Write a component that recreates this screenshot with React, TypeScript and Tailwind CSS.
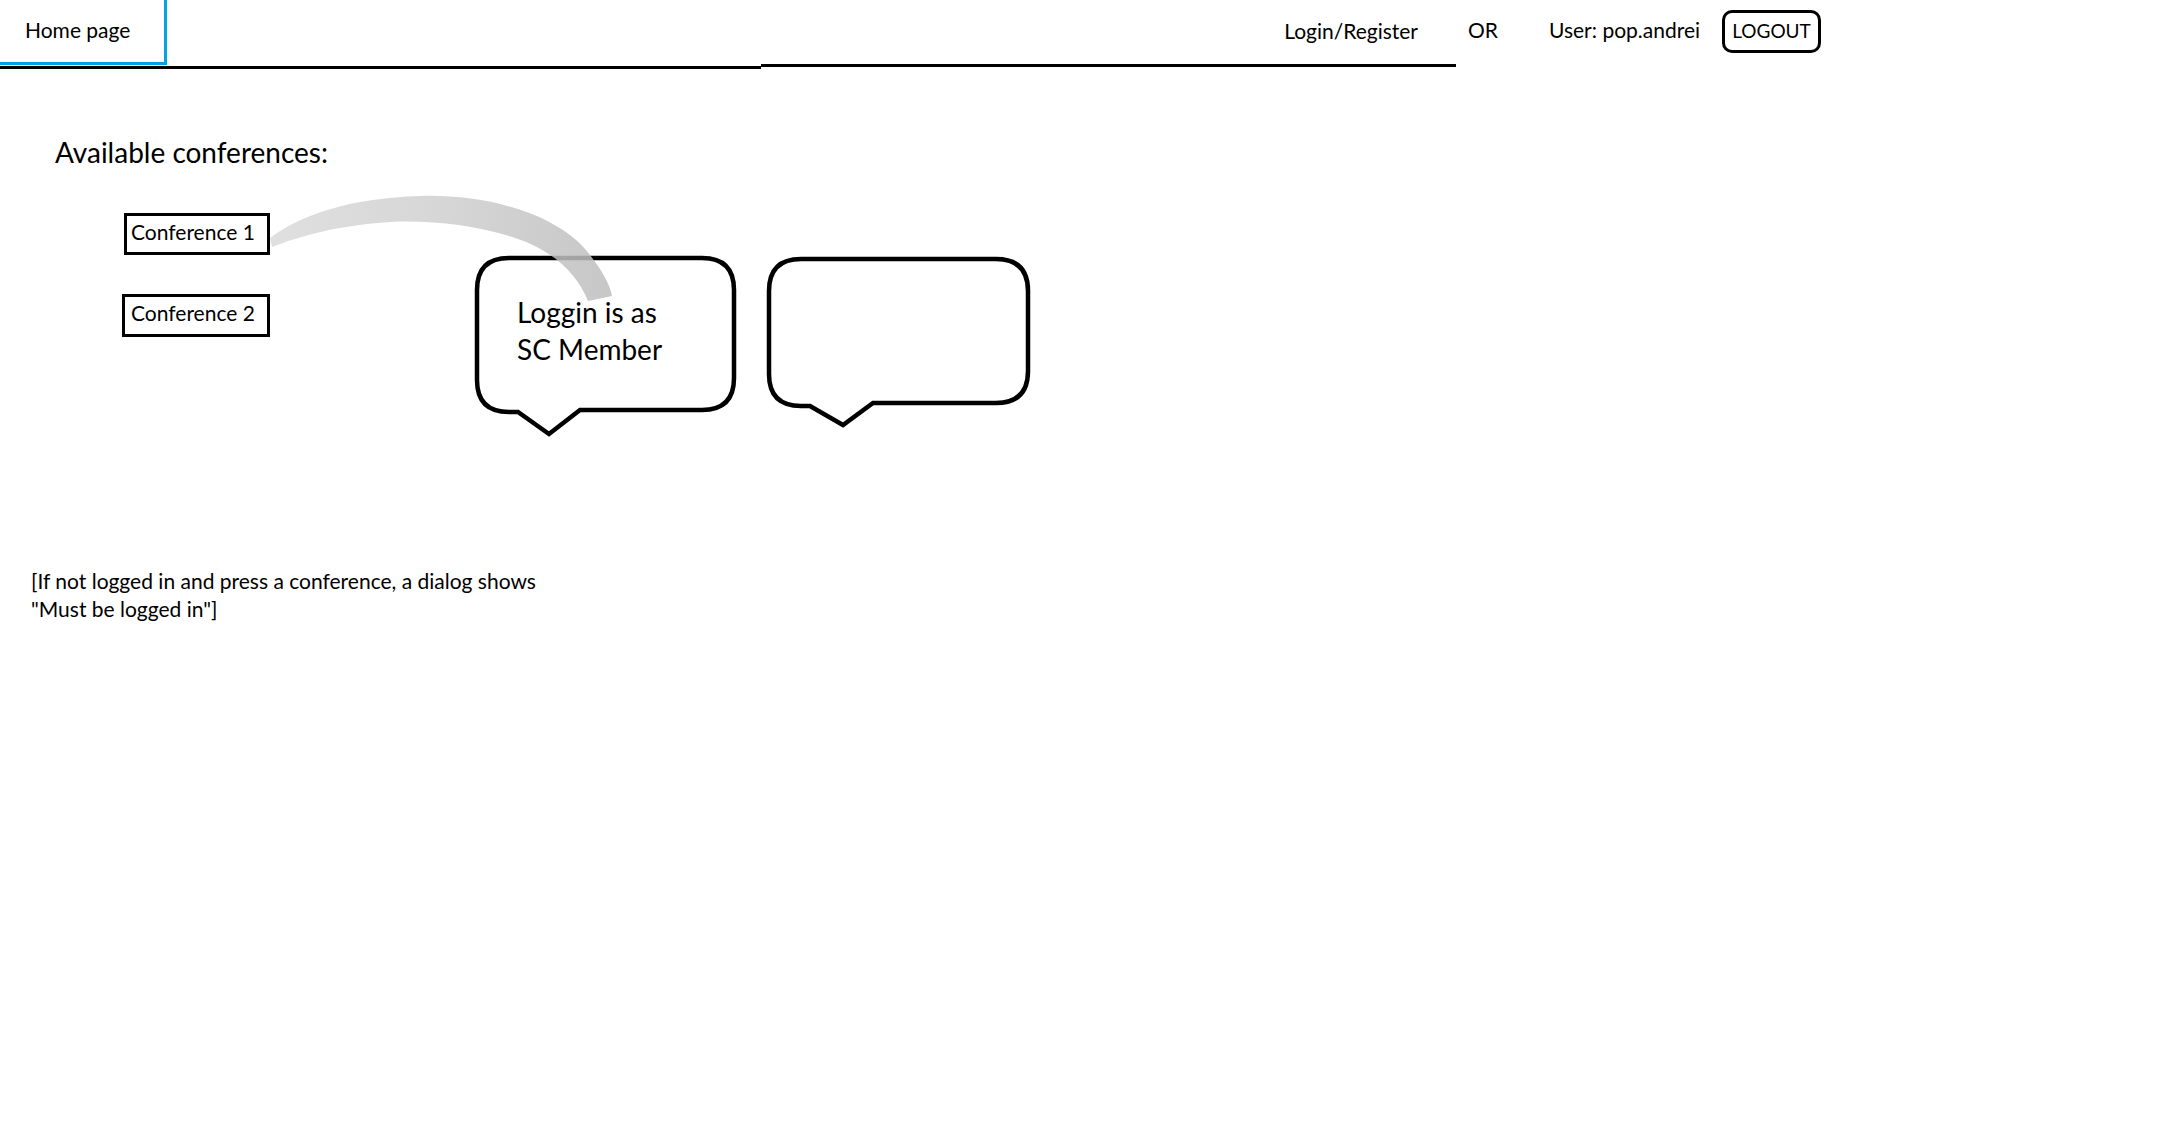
const SpeechBubble1 = () => (
  <svg className="absolute inset-0" width="265" height="185" viewBox="0 0 265 185" fill="none">
    <path
      d="M36 4 H229 Q261 4 261 36 V124 Q261 156 229 156 H107 L76 180 L45 158 H36 Q4 158 4 126 V36 Q4 4 36 4 Z"
      stroke="#000"
      strokeWidth="4.5"
      strokeLinejoin="miter"
    />
  </svg>
);

const SpeechBubble2 = () => (
  <svg className="absolute inset-0" width="268" height="176" viewBox="0 0 268 176" fill="none">
    <path
      d="M36 4 H231 Q263 4 263 36 V116 Q263 148 231 148 H108 L78 170 L45 151 H36 Q4 151 4 119 V36 Q4 4 36 4 Z"
      stroke="#000"
      strokeWidth="4.5"
      strokeLinejoin="miter"
    />
  </svg>
);

const App = () => {
  return (
    <div className="relative min-h-screen bg-white text-black font-['Lato',sans-serif]">
      <header className="flex items-start">
        <div className="w-[761px] h-[69px] border-b-[3px] border-black">
          <div className="w-[167px] h-[65px] border-r-[3px] border-b-[3px] border-[#00a2e8] pl-[25px] pt-[19px] text-[21px] leading-[21px]">
            Home page
          </div>
        </div>
        <div className="w-[695px] h-[67px] border-b-[3px] border-black flex justify-end pr-[38px] pt-[20px] text-[21px] leading-[21px]">
          Login/Register
        </div>
        <div className="w-[93px] pl-[12px] pt-[19px] text-[21px] leading-[21px]">OR</div>
        <div className="w-[173px] pt-[19px] text-[21px] leading-[21px]">User: pop.andrei</div>
        <button className="mt-[10px] w-[99px] h-[43px] border-[3px] border-black rounded-[10px] flex items-center justify-center pb-[2px] text-[19px] leading-[19px]">
          LOGOUT
        </button>
      </header>

      <main>
        <h2 className="pl-[55px] pt-[67px] text-[28px] leading-[32px] font-normal">Available conferences:</h2>

        <div className="flex items-start mt-[45px]">
          <div className="flex flex-col">
            <div className="ml-[124px] w-[146px] h-[42px] border-[3px] border-black pl-[4px] pt-[5px] text-[21px] leading-[21px]">
              Conference 1
            </div>
            <div className="ml-[122px] mt-[39px] w-[148px] h-[43px] border-[3px] border-black pl-[6px] pt-[5px] text-[21px] leading-[21px]">
              Conference 2
            </div>
          </div>

          <div className="relative ml-[203px] mt-[41px] w-[265px] h-[185px]">
            <SpeechBubble1 />
            <p className="relative pl-[44px] pt-[40px] text-[28px] leading-[37px]">
              Loggin is as
              <br />
              SC Member
            </p>
          </div>

          <div className="relative ml-[27px] mt-[42px] w-[268px] h-[176px]">
            <SpeechBubble2 />
          </div>
        </div>

        <p className="pl-[31px] mt-[128px] text-[21px] leading-[28px]">
          [If not logged in and press a conference, a dialog shows
          <br />
          "Must be logged in"]
        </p>
      </main>

      {/* grey brush stroke linking conference 1 to the bubble */}
      <svg className="absolute left-0 top-0 pointer-events-none" width="700" height="350" viewBox="0 0 700 350">
        <defs>
          <linearGradient id="brush" x1="270" y1="0" x2="612" y2="0" gradientUnits="userSpaceOnUse">
            <stop offset="0" stopColor="#dadada" />
            <stop offset="0.5" stopColor="#cfcfcf" />
            <stop offset="1" stopColor="#bdbdbd" />
          </linearGradient>
        </defs>
        <path
          d="M270 238 C300 215 350 198 420 196 C490 194 560 215 590 255 C603 272 610 285 612 296 L588 301 C578 276 556 252 518 239 C478 225 430 220 390 222 C340 225 300 236 272 247 Z"
          fill="url(#brush)"
          opacity="0.85"
        />
      </svg>
    </div>
  );
};

export default App;
